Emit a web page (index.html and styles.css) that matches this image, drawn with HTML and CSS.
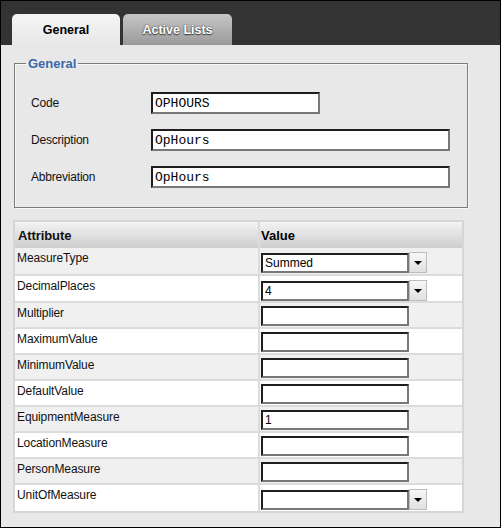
FILE: index.html
```html
<!DOCTYPE html>
<html>
<head>
<meta charset="utf-8">
<link rel="stylesheet" href="styles.css">
</head>
<body>
<div class="frame">
  <div class="tabbar">
    <div class="tab tab-on">General</div>
    <div class="tab tab-off">Active Lists</div>
  </div>
  <div class="content">
    <fieldset class="general">
      <legend class="legend">General</legend>
      <div class="frow"><span class="flabel">Code</span><input class="finput short" value="OPHOURS"></div>
      <div class="frow"><span class="flabel">Description</span><input class="finput long" value="OpHours"></div>
      <div class="frow"><span class="flabel">Abbreviation</span><input class="finput long" value="OpHours"></div>
    </fieldset>
    <div class="attrs">
      <div class="arow head"><div class="name">Attribute</div><div class="val">Value</div></div>
      <div class="arow odd sel"><div class="name">MeasureType</div><div class="val"><div class="select"><input class="tinput" value="Summed"><span class="arrow"></span></div></div></div>
      <div class="arow even sel2"><div class="name">DecimalPlaces</div><div class="val"><div class="select"><input class="tinput" value="4"><span class="arrow"></span></div></div></div>
      <div class="arow odd"><div class="name">Multiplier</div><div class="val"><input class="tinput" value=""></div></div>
      <div class="arow even"><div class="name">MaximumValue</div><div class="val"><input class="tinput" value=""></div></div>
      <div class="arow odd"><div class="name">MinimumValue</div><div class="val"><input class="tinput" value=""></div></div>
      <div class="arow even"><div class="name">DefaultValue</div><div class="val"><input class="tinput" value=""></div></div>
      <div class="arow odd"><div class="name">EquipmentMeasure</div><div class="val"><input class="tinput" value="1"></div></div>
      <div class="arow even"><div class="name">LocationMeasure</div><div class="val"><input class="tinput" value=""></div></div>
      <div class="arow odd"><div class="name">PersonMeasure</div><div class="val"><input class="tinput" value=""></div></div>
      <div class="arow even sel last"><div class="name">UnitOfMeasure</div><div class="val"><div class="select"><input class="tinput" value=""><span class="arrow"></span></div></div></div>
    </div>
  </div>
</div>
</body>
</html>
```

FILE: styles.css
```css
html, body {
  margin: 0;
  padding: 0;
  background: #fff;
}
.frame {
  width: 501px;
  height: 528px;
  box-sizing: border-box;
  border: 1px solid #000;
  background: #e8e8e8;
  font-family: "Liberation Sans", Arial, sans-serif;
  font-size: 12px;
  color: #000;
  overflow: hidden;
}
.tabbar {
  height: 44px;
  background: #333;
  display: flex;
  align-items: flex-end;
  gap: 3px;
  padding-left: 11px;
}
.tab {
  height: 31px;
  box-sizing: border-box;
  border-radius: 5px 5px 0 0;
  display: flex;
  align-items: center;
  justify-content: center;
  font-weight: bold;
  font-size: 12.5px;
}
.tab-on {
  width: 108px;
  background: linear-gradient(#f5f5f5, #e8e8e8);
  color: #000;
}
.tab-off {
  width: 109px;
  background: linear-gradient(#c6c6c6, #9a9a9a);
  color: #fff;
  text-shadow: 0 0 2px #333, 0 1px 1px #444;
}
.content {
  padding: 11px 0 0 12px;
}
.general {
  margin: 0 0 0 1px;
  width: 454px;
  box-sizing: border-box;
  border: 1px solid #7c7c7c;
  box-shadow: inset 1px 1px 0 #f6f6f6, 1px 1px 0 #f6f6f6;
  padding: 6px 0 19px 16px;
}
.legend {
  font-weight: bold;
  font-size: 13px;
  line-height: 15px;
  color: #3b68ab;
  padding: 0 2px;
  margin-left: -5px;
}
.frow {
  display: flex;
  align-items: center;
  height: 22px;
  margin-top: 15px;
}
.frow:first-of-type {
  margin-top: 15px;
}
.flabel {
  width: 120px;
  letter-spacing: -0.2px;
  color: #111;
}
.finput {
  height: 22px;
  box-sizing: border-box;
  border: 2px solid;
  border-color: #1e1e1e #787878 #787878 #1e1e1e;
  background: #fff;
  padding: 0 2px;
  margin: 0;
  font-family: "Liberation Mono", "Courier New", monospace;
  font-size: 13px;
  color: #000;
  outline: none;
}
.short { width: 169px; }
.long { width: 299px; }
.attrs {
  margin-top: 12px;
  width: 451px;
  box-sizing: border-box;
  border: 2px solid #d6d6d6;
  background: #fff;
}
.arow {
  display: flex;
  height: 26px;
  box-sizing: border-box;
  border-bottom: 2px solid #dcdcdc;
}
.arow.sel { height: 28px; }
.arow.sel2 { height: 27px; }
.arow.last { border-bottom: 0; height: 26px; }
.arow.odd { background: #f0f0f0; }
.arow.even { background: #fff; }
.arow.head {
  height: 26px;
  border-bottom: 0;
  background: linear-gradient(#f3f3f3, #cecece);
  font-weight: bold;
  font-size: 13px;
  align-items: center;
}
.name {
  width: 243px;
  box-sizing: border-box;
  padding: 3px 0 0 2px;
  letter-spacing: -0.1px;
  color: #111;
}
.val {
  flex: 1;
  border-left: 2px solid #dcdcdc;
  padding: 3px 0 0 1px;
}
.head .name, .head .val {
  padding-top: 0;
  height: 26px;
  display: flex;
  align-items: center;
  box-sizing: border-box;
}
.head .name { padding-left: 3px; }
.sel .val, .sel2 .val { padding-top: 4px; }
.sel .name, .sel2 .name { padding-top: 3px; }
.tinput {
  width: 148px;
  height: 20px;
  box-sizing: border-box;
  border: 2px solid;
  border-color: #1e1e1e #787878 #787878 #1e1e1e;
  background: #fff;
  padding: 0 2px;
  margin: 0;
  font-family: "Liberation Sans", Arial, sans-serif;
  font-size: 12px;
  color: #000;
  outline: none;
  display: block;
}
.select {
  display: flex;
  align-items: flex-start;
}
.select .tinput { margin-top: 1px; }
.arrow {
  width: 18px;
  height: 21px;
  box-sizing: border-box;
  border: 1px solid #bdbdbd;
  background: linear-gradient(#f8f8f8, #e0e0e0);
  display: flex;
  align-items: center;
  justify-content: center;
}
.arrow::before {
  content: "";
  width: 0;
  height: 0;
  border-left: 4px solid transparent;
  border-right: 4px solid transparent;
  border-top: 4px solid #000;
}
```
